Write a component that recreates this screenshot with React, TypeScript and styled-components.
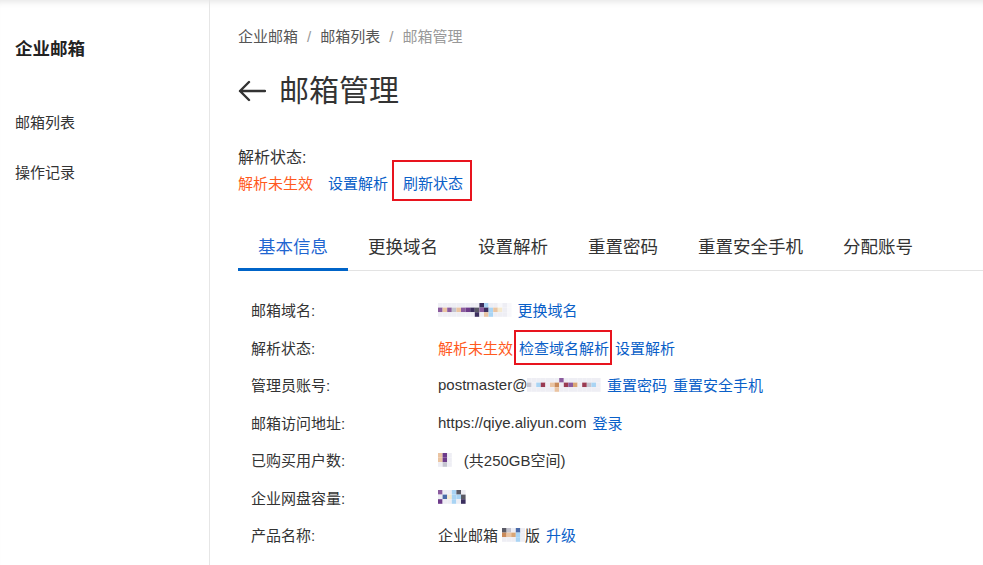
import styled, { createGlobalStyle } from "styled-components";

const GlobalStyle = createGlobalStyle`
  html, body {
    margin: 0;
    padding: 0;
    background: #fff;
  }
  body {
    font-family: "Liberation Sans", "Noto Sans CJK SC", sans-serif;
    color: #333;
  }
`;

const PALETTE: Record<string, string> = {
  W: "#eeeef4",
  w: "#f8f8fb",
  p: "#8b5c9e",
  P: "#6d3b8a",
  t: "#eac4a2",
  T: "#d9a676",
  d: "#3b2f5e",
  b: "#a9d4f4",
  B: "#4a6aa8",
  g: "#c4c4cf",
  G: "#5a5a66",
  y: "#f5ead0",
  r: "#9a3b52",
  o: "#c98a5a",
};

function Mosaic({ rows, cell = 4.6 }: { rows: string[]; cell?: number }) {
  const cols = rows[0].length;
  return (
    <MosaicSvg width={cols * cell} height={rows.length * cell} viewBox={`0 0 ${cols * cell} ${rows.length * cell}`}>
      {rows.map((row, y) =>
        row.split("").map((c, x) =>
          c === "." ? null : (
            <rect key={`${x}-${y}`} x={x * cell} y={y * cell} width={cell} height={cell} fill={PALETTE[c]} />
          )
        )
      )}
    </MosaicSvg>
  );
}

function App() {
  return (
    <Page>
      <GlobalStyle />
      <Sidebar>
        <SideTitle>企业邮箱</SideTitle>
        <SideItem>邮箱列表</SideItem>
        <SideItem>操作记录</SideItem>
      </Sidebar>
      <Main>
        <Breadcrumb>
          <Crumb>企业邮箱</Crumb>
          <Sep>/</Sep>
          <Crumb>邮箱列表</Crumb>
          <Sep>/</Sep>
          <Crumb current>邮箱管理</Crumb>
        </Breadcrumb>
        <TitleRow>
          <svg width="28" height="22" viewBox="0 0 28 22" fill="none" stroke="#333" strokeWidth="2.4" strokeLinecap="round" strokeLinejoin="round">
            <path d="M27 11H2M11 2 2 11l9 9" />
          </svg>
          <Title>邮箱管理</Title>
        </TitleRow>
        <StatusLabel>解析状态:</StatusLabel>
        <StatusLinks>
          <Warn>解析未生效</Warn>
          <Link>设置解析</Link>
          <Highlight variant="wide">
            <Link>刷新状态</Link>
          </Highlight>
        </StatusLinks>
        <Tabs>
          <Tab active>基本信息</Tab>
          <Tab>更换域名</Tab>
          <Tab>设置解析</Tab>
          <Tab>重置密码</Tab>
          <Tab>重置安全手机</Tab>
          <Tab>分配账号</Tab>
        </Tabs>
        <InfoList>
          <InfoRow>
            <Label>邮箱域名:</Label>
            <Value>
              <Mosaic
                rows={["WWWWWWWWWdbWWwWw", "ptpgtpPdGpdbtyWw", "WWWWWWWWdWtbWWWw"]}
              />
              <Link gap>更换域名</Link>
            </Value>
          </InfoRow>
          <InfoRow>
            <Label>解析状态:</Label>
            <Value>
              <Warn>解析未生效</Warn>
              <Highlight variant="tight">
                <Link gap>检查域名解析</Link>
              </Highlight>
              <Link gap>设置解析</Link>
            </Value>
          </InfoRow>
          <InfoRow>
            <Label>管理员账号:</Label>
            <Value>
              postmaster@
              <Mosaic rows={["WWWWWWWpWWWWWWWW", "gWbrWtoWrpTWrgbW", "WWWWWWtWWWWWWWWW"]} />
              <Link gap>重置密码</Link>
              <Link gap>重置安全手机</Link>
            </Value>
          </InfoRow>
          <InfoRow>
            <Label>邮箱访问地址:</Label>
            <Value>
              https://qiye.aliyun.com
              <Link gap>登录</Link>
            </Value>
          </InfoRow>
          <InfoRow>
            <Label>已购买用户数:</Label>
            <Value>
              <Mosaic rows={["tPW", "tPW", "WgW"]} />
              <Plain>(共250GB空间)</Plain>
            </Value>
          </InfoRow>
          <InfoRow>
            <Label>企业网盘容量:</Label>
            <Value>
              <Mosaic rows={["pWWbGW", "WBybbG", "PWWbWd"]} />
            </Value>
          </InfoRow>
          <InfoRow>
            <Label>产品名称:</Label>
            <Value>
              企业邮箱
              <Spacer />
              <Mosaic rows={["GgWBW", "otTbW", "WWWbW"]} />
              版
              <Link gap>升级</Link>
            </Value>
          </InfoRow>
        </InfoList>
      </Main>
    </Page>
  );
}

const Page = styled.div`
  display: flex;
  min-height: 565px;
  box-shadow: inset 0 7px 6px -5px rgba(0, 0, 0, 0.1);
`;

const Sidebar = styled.aside`
  width: 210px;
  flex-shrink: 0;
  border-right: 1px solid #e6e6e6;
  padding: 37px 0 0 15px;
  box-sizing: border-box;
  display: flex;
  flex-direction: column;
`;

const SideTitle = styled.div`
  font-size: 17.5px;
  font-weight: 700;
  line-height: 24px;
  color: #222;
  margin-bottom: 50px;
`;

const SideItem = styled.div`
  font-size: 15px;
  line-height: 24px;
  color: #333;
  margin-bottom: 26px;
`;

const Main = styled.main`
  flex: 1;
  padding: 26px 0 0 28px;
  display: flex;
  flex-direction: column;
  align-items: flex-start;
`;

const Breadcrumb = styled.div`
  display: flex;
  align-items: center;
  font-size: 15px;
  line-height: 22px;
`;

const Crumb = styled.span<{ current?: boolean }>`
  color: ${(p) => (p.current ? "#999" : "#555")};
`;

const Sep = styled.span`
  color: #999;
  margin: 0 9px;
`;

const TitleRow = styled.div`
  display: flex;
  align-items: center;
  gap: 13px;
  margin-top: 23px;
  height: 40px;
`;

const Title = styled.h1`
  margin: 0;
  font-size: 30px;
  font-weight: 400;
  color: #333;
  line-height: 40px;
`;

const StatusLabel = styled.div`
  font-size: 16px;
  line-height: 24px;
  color: #333;
  margin-top: 35px;
`;

const StatusLinks = styled.div`
  display: flex;
  align-items: center;
  gap: 15px;
  font-size: 15px;
  line-height: 24px;
  margin-top: 2px;
`;

const Warn = styled.span`
  color: #ff5a1e;
`;

const Link = styled.span<{ gap?: boolean }>`
  color: #0a60c8;
  margin-left: ${(p) => (p.gap ? "6px" : "0")};
  cursor: pointer;
`;

const Plain = styled.span`
  margin-left: 12px;
`;

const Spacer = styled.span`
  width: 4px;
`;

const Highlight = styled.span<{ variant: "wide" | "tight" }>`
  position: relative;
  display: inline-flex;
  &::after {
    content: "";
    position: absolute;
    border: 2px solid #e8141e;
    pointer-events: none;
    inset: ${(p) => (p.variant === "wide" ? "-12px -9px -5px -11px" : "-7px -3px -7px 1px")};
  }
`;

const Tabs = styled.div`
  display: flex;
  align-self: stretch;
  border-bottom: 1px solid #e3e3e3;
  margin-top: 39px;
`;

const Tab = styled.div<{ active?: boolean }>`
  padding: 0 20px 9px;
  font-size: 17.5px;
  line-height: 24px;
  color: ${(p) => (p.active ? "#1f66d1" : "#333")};
  border-bottom: 3px solid ${(p) => (p.active ? "#0064c8" : "transparent")};
  margin-bottom: -1px;
`;

const InfoList = styled.div`
  display: flex;
  flex-direction: column;
  padding: 20px 0 0 13px;
`;

const InfoRow = styled.div`
  display: flex;
  align-items: center;
  height: 37.5px;
  font-size: 15px;
  color: #333;
`;

const Label = styled.div`
  width: 187px;
`;

const Value = styled.div`
  display: flex;
  align-items: center;
`;

const MosaicSvg = styled.svg`
  display: block;
  flex-shrink: 0;
`;

export default App;
